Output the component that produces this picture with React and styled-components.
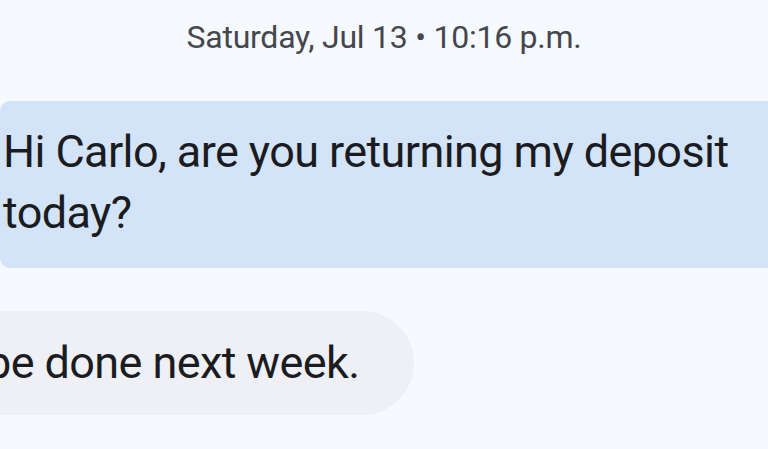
import styled, { createGlobalStyle } from 'styled-components'

const Global = createGlobalStyle`
  html, body {
    margin: 0;
    padding: 0;
    background: #f6f9fe;
    overflow: hidden;
  }
  body {
    font-family: Roboto, "Noto Sans", "Liberation Sans", sans-serif;
  }
`

const Thread = styled.div`
  width: 768px;
  height: 449px;
  overflow: hidden;
  display: flex;
  flex-direction: column;
  background: #f6f9fe;
`

const Stamp = styled.div`
  height: 101px;
  padding-top: 16px;
  box-sizing: border-box;
  text-align: center;
  font-size: 32px;
  line-height: 42px;
  letter-spacing: -0.25px;
  color: #44474e;
`

const Bubble = styled.div`
  box-sizing: border-box;
  font-size: 45px;
  line-height: 61px;
  letter-spacing: -0.6px;
  color: #1b1c21;
  white-space: ${(p) => (p.$nowrap ? 'nowrap' : 'normal')};
`

const Sent = styled(Bubble)`
  align-self: flex-start;
  width: 820px;
  padding: 20px 36px 25px 3px;
  background: #d3e4f8;
  border-radius: 10px 0 0 10px;
`

const Received = styled(Bubble)`
  align-self: flex-start;
  margin-top: 43px;
  margin-left: -66px;
  height: 104px;
  padding: 21px 54px 22px 52px;
  background: #eef0f6;
  border-radius: 52px;
`

export default function App() {
  return (
    <>
      <Global />
      <Thread>
        <Stamp>Saturday, Jul 13 • 10:16 p.m.</Stamp>
        <Sent>Hi Carlo, are you returning my deposit today?</Sent>
        <Received $nowrap>be done next week.</Received>
      </Thread>
    </>
  )
}
